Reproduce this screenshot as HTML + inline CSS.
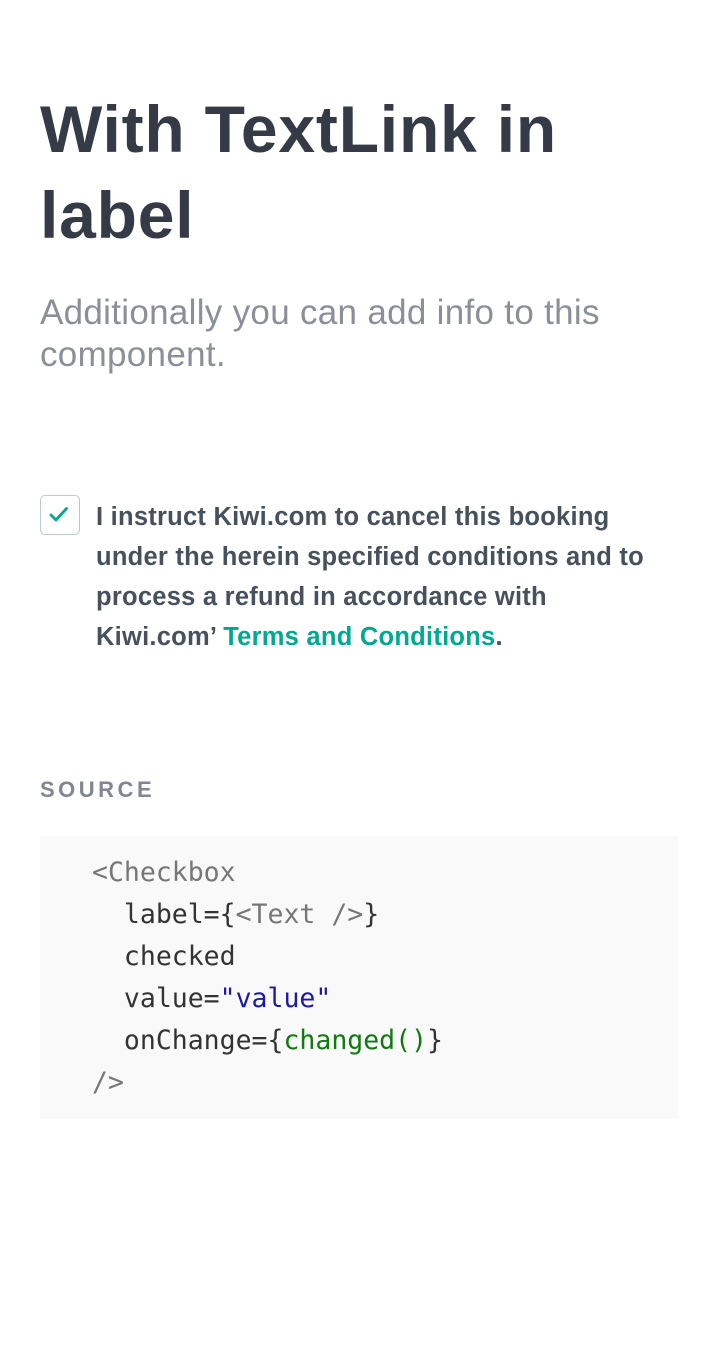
<!DOCTYPE html>
<html><head><style>
body{margin:0;width:718px;height:1360px;background:#fff;font-family:"Liberation Sans",sans-serif;position:relative;overflow:hidden}
h1{position:absolute;left:40px;top:86px;margin:0;font-size:66px;line-height:86px;font-weight:bold;color:#343a46;letter-spacing:0.8px}
.sub{position:absolute;left:40px;top:292px;margin:0;font-size:35px;line-height:42px;color:#8a8f99;width:680px;letter-spacing:0.3px}
.cb{position:absolute;left:40px;top:495px;width:40px;height:40px;border:1.5px solid #bac7d5;border-radius:5px;box-sizing:border-box}
.lbl{position:absolute;left:96px;top:497px;width:620px;font-size:25.5px;line-height:40px;color:#46515e;font-weight:bold;white-space:nowrap;letter-spacing:0.25px}
.lbl a{color:#00a991;text-decoration:none}
.src{position:absolute;left:40px;top:777px;font-size:22px;font-weight:bold;letter-spacing:3.5px;color:#7f8791}
pre{position:absolute;left:40px;top:836px;width:638px;height:283px;margin:0;background:#f9f9f9;box-sizing:border-box;padding:16px 0 0 52px;font-family:"DejaVu Sans Mono","Liberation Mono",monospace;font-size:26.5px;line-height:42px;color:#333}
.g{color:#777}.b{color:#1a1aa6}.gr{color:#107a10}
</style></head><body>
<h1>With TextLink in<br>label</h1>
<p class="sub">Additionally you can add info to this<br>component.</p>
<div class="cb"><svg width="37" height="37" viewBox="0 0 37 37" style="position:absolute;left:0;top:0"><path d="M10 19l5 5 10.5-11.5" fill="none" stroke="#00a991" stroke-width="2.8" stroke-linecap="round" stroke-linejoin="round"/></svg></div>
<div class="lbl">I instruct Kiwi.com to cancel this booking<br>under the herein specified conditions and to<br>process a refund in accordance with<br>Kiwi.com’ <a>Terms and Conditions</a>.</div>
<div class="src">SOURCE</div>
<pre><span class="g">&lt;Checkbox</span>
  label={<span class="g">&lt;Text /&gt;</span>}
  checked
  value=<span class="b">"value"</span>
  onChange={<span class="gr">changed()</span>}
<span class="g">/&gt;</span></pre>
</body></html>
